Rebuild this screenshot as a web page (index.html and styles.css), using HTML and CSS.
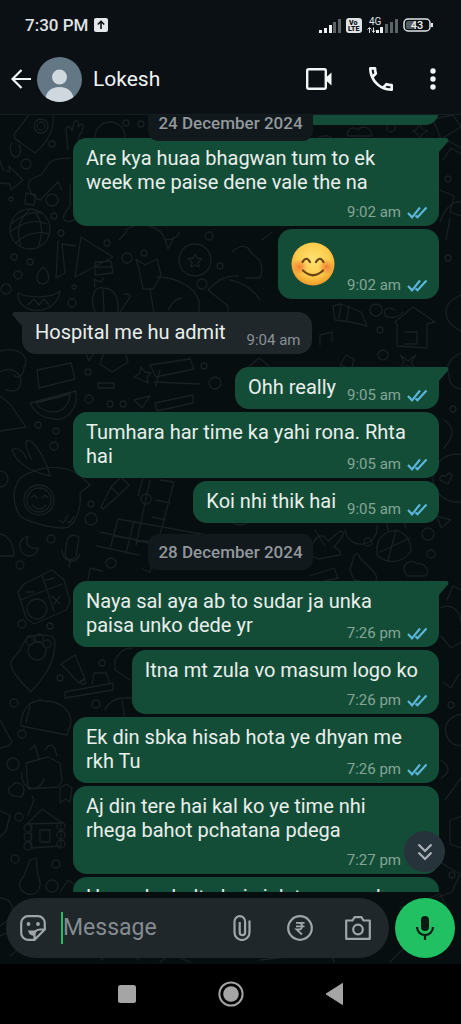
FILE: index.html
```html
<!DOCTYPE html>
<html lang="en">
<head>
<meta charset="utf-8">
<meta name="viewport" content="width=device-width, initial-scale=1">
<title>Lokesh</title>
<link rel="stylesheet" href="styles.css">
</head>
<body>
<svg class="defs" width="0" height="0" aria-hidden="true">
  <symbol id="ticks" viewBox="0 0 21 13">
    <path d="M1 7l4 4.300L13 1.500M8.500 9.500l2 1.800L19.500 1.500" fill="none" stroke="currentColor" stroke-width="2.100"/>
  </symbol>
</svg>
<div class="phone">
  <header class="top">
    <div class="status">
      <span class="clock">7:30 PM</span>
      <svg class="upload" width="14" height="14" viewBox="0 0 14 14"><rect width="14" height="14" rx="2" fill="#e4e8ea"/><path d="M7 11V3.500M3.800 6.500L7 3.300l3.200 3.200" fill="none" stroke="#0b1014" stroke-width="1.600"/></svg>
      <div class="indicators">
        <svg width="22" height="15" viewBox="0 0 22 15"><g fill="#eef1f2"><rect y="12" width="3" height="3"/><rect x="5" y="10" width="3" height="5"/><rect x="10" y="7" width="3" height="8"/></g><g fill="#5d6468"><rect x="14" y="4" width="3" height="11"/><rect x="19" y="1" width="3" height="14"/></g></svg>
        <svg width="16" height="15" viewBox="0 0 16 15"><rect width="16" height="15" rx="3" fill="#dfe3e5"/><g class="volte"><text x="3" y="7">Vo</text><text x="2" y="13">LTE</text></g></svg>
        <svg width="31" height="17" viewBox="0 0 31 17"><text class="net" x="2" y="8">4G</text><path d="M2.500 16v-5M.5 12.500l2-2 2 2M6.500 10.500v5M5 13.500l1.500 2 1.500-2" stroke="#dfe3e5" fill="none"/><g fill="#eef1f2"><rect x="9" y="13" width="3" height="3"/><rect x="13" y="10" width="3" height="6"/></g><g fill="#5d6468"><rect x="18" y="7" width="3" height="9"/><rect x="23" y="5" width="3" height="11"/><rect x="28" y="2" width="3" height="14"/></g></svg>
        <svg width="30" height="14" viewBox="0 0 30 14"><rect x="1" y="1" width="26" height="12" rx="4" fill="none" stroke="#dfe3e5" stroke-width="1.500"/><rect x="3" y="3" width="9" height="8" rx="2" fill="#555b5f"/><path d="M29 5v4" stroke="#dfe3e5" stroke-width="2"/><text class="charge" x="14" y="11">43</text></svg>
      </div>
    </div>
    <div class="appbar">
      <button class="icon-btn" aria-label="Back"><svg width="20" height="20" viewBox="0 0 20 20"><path d="M20 10H2M10.500 1L1.500 10l9 9" fill="none" stroke="#f3f6f7" stroke-width="2.200"/></svg></button>
      <svg class="avatar" width="45" height="45" viewBox="0 0 45 45"><defs><clipPath id="face"><circle cx="22.500" cy="22.500" r="22.500"/></clipPath></defs><g clip-path="url(#face)"><rect width="45" height="45" fill="#647785"/><circle cx="22.500" cy="20" r="7.500" fill="#cfd8df"/><path d="M8 45c0-10 6-15 14.500-15S37 35 37 45z" fill="#cfd8df"/></g></svg>
      <h1 class="name">Lokesh</h1>
      <nav class="actions">
        <button class="icon-btn" aria-label="Video call"><svg width="26" height="22" viewBox="0 0 26 22"><rect x="1.200" y="1.200" width="18.600" height="19.600" rx="1.500" fill="none" stroke="#f3f6f7" stroke-width="2.400"/><path d="M20 9.500L25.500 4.500v13L20 12.500z" fill="#f3f6f7"/></svg></button>
        <button class="icon-btn" aria-label="Voice call"><svg width="24" height="24" viewBox="3 3 18 18"><path fill="#f3f6f7" d="M6.540 5c.06.890.21 1.760.45 2.590l-1.200 1.200c-.41-1.200-.67-2.470-.76-3.790h1.510m9.860 12.020c.85.240 1.720.390 2.600.450v1.490c-1.320-.09-2.590-.35-3.800-.75l1.200-1.190M7.500 3H4c-.55 0-1 .45-1 1 0 9.390 7.610 17 17 17 .55 0 1-.45 1-1v-3.490c0-.55-.45-1-1-1-1.240 0-2.450-.2-3.570-.57-.1-.04-.21-.05-.31-.05-.26 0-.51.1-.71.290l-2.200 2.200c-2.830-1.450-5.150-3.760-6.590-6.590l2.200-2.200c.28-.28.360-.67.250-1.020C8.700 6.450 8.500 5.250 8.500 4c0-.55-.45-1-1-1z"/></svg></button>
        <button class="icon-btn" aria-label="More options"><svg width="6" height="22" viewBox="0 0 6 22"><g fill="#f3f6f7"><circle cx="3" cy="3" r="2.700"/><circle cx="3" cy="11" r="2.700"/><circle cx="3" cy="19" r="2.700"/></g></svg></button>
      </nav>
    </div>
  </header>

  <div class="conversation">
    <svg class="wallpaper" viewBox="0 115 461 849" preserveAspectRatio="xMidYMin slice" aria-hidden="true">
      <g fill="none" stroke="#182023" stroke-width="1.300" stroke-linejoin="round" stroke-linecap="round">
        <path d="M15 133l14-18M53 115c2 14-6 28-18 38l-20-14M15 133c-2 4 0 6 4 8M12 143c-4 6 0 14 4 14s6-8 3-12M68 150l-2-20c0-6 5-4 6 1l2-8c2-5 6-2 4 4l3-3c4 0 2 8-2 12l-1 14M95 137a14 14 0 0 1 30 0"/>
        <circle cx="41" cy="126" r="7"/><circle cx="41" cy="126" r="4"/>
        <path d="M0 161l3 9 7 2-1-6 14 14-12 10-1-6-10-1M30 180c-4 6 2 18 10 20l18-18 4 8M30 180l12-6 8-12c8-5 16-3 20-4M26 193l10 2-2 10-9-1zM70 185v20l-6 10c-3 8 8 8 14 2"/>
        <circle cx="30" cy="229" r="20"/><path d="M11 224q18-14 30-11M10 232q20-16 37-8M16 243q14-14 33-9M30 209q-17 16-9 37M33 209q14 16 5 38"/>
        <path d="M58 241l-2 37 9-5-3-29 14 2M81 237l32 20-38 20zM95 262l16-1 2 12-18 2zM94 267h18M119 240l8-9M125 230c16-10 36-4 40 10 8 0 14-4 14-8M165 240l3 9 6-12"/>
        <circle cx="195" cy="260" r="16"/><path d="M195 254l2 4 5 1-4 3 1 5-4-2-4 2 1-5-4-3 5-1z"/>
        <path d="M18 293c-2 22 38 25 42-2-10 8-32 7-42 2zM43 267c-8 7-8 16 0 17 8-1 7-12 0-17zM28 305l6-6 5 6 5-6 5 6M95 312c-6-15 0-26 8-24 12 0 16 10 15 24M103 290l1 22M95 287l-1-8 6 3 4-4M120 312c12-18 14-18 4-18M139 269l-3-10 9 6 12-6 4 16-8 14h-10l-4-20M157 277c20 0 38 10 42 24v12M150 289l4 24M168 310q6-12 14-12M208 290q14-16 30-14M208 290l20 16v8"/>
        <path d="M37 370l34-7 4 16-36 9zM0 351c22-5 30 8 24 16 0 10-8 12-10 8M0 372c10-6 24 0 20 14-4 8-10 4-14 4M30 403l46-12c2 20-10 30-22 28-12-1-20-8-24-16zM36 403l34-9c0 10-8 18-16 18-10 0-15-4-18-9M0 396l10 8 16 23-26 4M100 364l4-12 20-4 4 14-16 10zM150 365l40-6 4 10-38 8zM154 382l46 2M160 370l-4 16M155 403l38-8v8l-36 8z"/>
        <path d="M12 450c6 16 22 22 38 26-4-16-10-26-18-34-10-6-6 8 0 18M12 450c6-4 12 2 14 8M20 478q24-16 50-8 10 4 20 15l-10 8c2 14-5 35-16 35-14 0-36-6-44-12q-12-20 0-38z"/>
        <circle cx="39" cy="500" r="15"/><circle cx="39" cy="500" r="12"/><path d="M31 498l3-3 3 3M42 498l3-3 3 3M32 505q8 8 14 0M59 520l4 3 5-8M66 521l3 2 5-6M101 507l10-20 8 8-16 14zM111 487l10-10 8 8-10 10M128 478l18-12-8 30M118 519l100 18M113 536l90 14M100 532l98 22M97 546l42 9M118 519l-8 30M134 521l-8 32M150 480l-14 65M174 482l-24 90M160 480l14 2M156 500l14 3M152 517l14 3M150 572l-8-3"/>
        <path d="M28 536c-12 4-10 18 0 20 6 0 10-4 10-8-8 2-14-4-10-12M67 540q4-8 12-3l-3 20q-8 6-11-2zM62 550c0 12 14 16 18 4M70 562l-1 5M0 534c10 2 14 12 14 22H0M18 592l6-8 28-14 12 10 6 22-4 8-32 14-8-6zM20 600l42-16M42 575l12 36M26 592h8M46 580l8-2M52 596l8 8M60 596l-6 8M88 580l2-12 12 3"/><circle cx="37" cy="609" r="10"/>
        <path d="M22 646l6-10c10 0 22-4 27 4 0 24-10 36-24 52-8-8-20-20-20-28 0-8 8-8 11-18z"/><circle cx="37" cy="651" r="9"/><circle cx="30" cy="641" r="4"/><circle cx="39" cy="638" r="4"/><circle cx="47" cy="644" r="4"/>
        <path d="M61 664l14-9 10 24-6 4zM80 681l4-2 2 4-4 2zM65 692l48-9v7l-48 8zM92 684l2-11h12l4 10M21 721c4-18 12-22 24-20 14 0 26 8 26 22l-4 12-46-9zM26 722l4-16M32 703l10-4M0 720l12 22-4 4-8 2M26 763l22-6 12 6 2 18-4 6-30 2zM22 773c-2 18 18 20 22 6M30 750l5-5 4 14M45 750q8-12 12 6M60 788l6-4 6 4-2 14-5-3-5 4z"/>
        <path d="M27 824l15-15 20 14M27 824l36-1M31 824v24l30-2v-22M40 830h10v12H40zM28 815l6-15-2-4"/><circle cx="28" cy="828" r="4"/><circle cx="28" cy="837" r="4"/><circle cx="28" cy="846" r="4"/><circle cx="61" cy="826" r="4"/><circle cx="61" cy="835" r="4"/><circle cx="61" cy="844" r="4"/>
        <path d="M30 860l6-2 2 18c6 12-2 20-10 18s-12-10-4-18zM0 898c12 0 16 12 10 20l-10 8M0 936q18-10 20 12l-10 8M60 892l8-12 12 8M100 960q20-12 40 0M160 962l10-8 20 8"/>
        <path d="M318 138q14-6 14 4M348 136c-2-8 6-10 10-6 4-6 14-2 14 6zM413 131l4-2 2-6 3 6 6 2-6 3-2 5-3-5zM433 119l20-4 8 12-20 12zM447 140l14 8M443 160l8-12 10 6M440 190l14 6-4 16 11 4M440 222q8-22 21-20M446 240l4-22M232 252q14-12 20 2 14 8 8 24h-14M262 240l10-8M230 280q20 4 30 20M333 306l8-2 20 8 6 14-16-4-16-2zM341 304l-2 14M349 306l-2 14M320 345v-10l12-3v10M395 322l18-15 22 15-8 2v24l-30-2v-22zM405 332h12v12h-12M461 295c-20 8-20 26 0 36M395 310c-8-4-12-1-10 5 4 4 14 3 18-3"/>
        <path d="M245 370l14-12 10 8M340 365l6-10 8 4-2 10zM400 355l8 6 8-6-5 8 5 7-9-5-8 5 5-8zM461 353q-18 8-12 22 0 12 12 14M444 420q16 10 0 28"/>
        <circle cx="457" cy="478" r="24"/><path d="M440 480l8 4 4-8q-2-6-6 0-7-2-6 4M437 516l14 4-10 8zM377 549c0-12 10-20 22-18 8 4 12 10 12 20-8 12-24 14-34 4zM388 530l-2-12 16-2 4 12M380 552l30-14M388 560l8-30M315 530l10 16M312 545q8-16 16-4l12-10q5 0 2 6l-8 10q8 4 6 8l-22 4q-10-4-12-10M350 570l4-14q4-6 6 2l14 14q6 8-2 12l-18-4zM405 572c-4-8 6-14 12-8 8-2 14 8 8 12h-18zM310 576l24-8 4 10-26 6M345 530a16 16 0 0 0 32-4"/>
        <path d="M447 600l6-14 8 4M440 608c12-6 21 4 21 16M441 636l10 12 10-6M443 682l8 6 8-14M461 714c-18 4-20 20-8 30l8 2M441 760q14 10 0 18M445 800l16-22M452 820l9-4M450 820v24l11 4M440 862l20 12-8 18-16 6M400 908l40-14 6 12M390 962l24-24M260 960l70-8 4 10"/>
        <g><circle cx="52" cy="200" r="6"/><circle cx="26" cy="164" r="5"/><circle cx="52" cy="144" r="3"/><circle cx="126" cy="123" r="3"/><circle cx="141" cy="124" r="3"/><circle cx="11" cy="199" r="2"/><circle cx="61" cy="233" r="3"/><circle cx="54" cy="216" r="3"/><circle cx="127" cy="258" r="5"/><circle cx="107" cy="243" r="3"/><circle cx="144" cy="253" r="3"/><circle cx="209" cy="236" r="4"/><circle cx="220" cy="266" r="3"/><circle cx="202" cy="284" r="5"/><circle cx="18" cy="275" r="4"/><circle cx="14" cy="257" r="3"/><circle cx="30" cy="262" r="3"/><circle cx="72" cy="303" r="4"/><circle cx="6" cy="289" r="5"/><circle cx="74" cy="287" r="2"/><circle cx="391" cy="128" r="4"/><circle cx="376" cy="310" r="6"/><circle cx="380" cy="330" r="3"/><circle cx="448" cy="258" r="3"/><circle cx="448" cy="179" r="3"/></g>
        <g><circle cx="89" cy="399" r="4"/><circle cx="88" cy="372" r="3"/><circle cx="110" cy="404" r="3"/><circle cx="123" cy="404" r="3"/><circle cx="215" cy="383" r="6"/><circle cx="204" cy="366" r="3"/><circle cx="54" cy="446" r="4"/><circle cx="56" cy="431" r="3"/><circle cx="38" cy="425" r="3"/><circle cx="0" cy="479" r="8"/><circle cx="91" cy="519" r="6"/><circle cx="91" cy="504" r="3"/><circle cx="51" cy="539" r="4"/><circle cx="20" cy="565" r="4"/><circle cx="111" cy="563" r="5"/><circle cx="146" cy="499" r="5"/><circle cx="22" cy="624" r="4"/><circle cx="50" cy="626" r="3"/><circle cx="60" cy="678" r="3"/><circle cx="102" cy="663" r="3"/><circle cx="96" cy="704" r="4"/><circle cx="14" cy="703" r="4"/><circle cx="22" cy="734" r="4"/><circle cx="13" cy="764" r="6"/><circle cx="19" cy="817" r="4"/><circle cx="56" cy="864" r="4"/><circle cx="15" cy="859" r="4"/><circle cx="52" cy="886" r="6"/><circle cx="428" cy="534" r="6"/><circle cx="368" cy="542" r="4"/><circle cx="431" cy="554" r="4"/><circle cx="383" cy="355" r="5"/><circle cx="453" cy="409" r="3"/><circle cx="451" cy="705" r="3"/><circle cx="452" cy="875" r="3"/></g>
        <path d="M97 347h14M98 383h16v5H98zM134 377l6-4 1-6 4 5 6 1-4 4 1 6-6-3zM134 400l16-4-8 12zM85 351l4 10 6-10M16 796c-8 0-10-8-4-10 4-6 12-2 12 4 0 6-4 8-8 6zM0 811l10 4-4 16-6 6M115 660q6-12 17-12M115 660v10l15 10M105 710q6-14 27-12M125 720l-3-20M230 521q10 8 20 0"/>
      </g>
    </svg>

    <main class="chat">
      <div class="floating-day"><span class="day-label">24 December 2024</span></div>
      <div class="messages">
        <div class="msg sent row"><p>Bhai paise kab doge</p></div>
        <div class="msg sent tail stacked"><p>Are kya huaa bhagwan tum to ek week me paise dene vale the na</p><div class="meta"><time>9:02 am</time><svg width="21" height="13"><use href="#ticks"/></svg></div></div>
        <div class="msg sent row"><svg class="emoji" role="img" aria-label="Smiling face" width="44" height="44" viewBox="0 0 44 44"><defs><radialGradient id="skin" cx=".5" cy=".4" r=".6"><stop offset="0" stop-color="#ffe273"/><stop offset=".65" stop-color="#fccb4a"/><stop offset="1" stop-color="#f09a28"/></radialGradient><radialGradient id="blush"><stop offset="0" stop-color="#ef6a2f" stop-opacity=".8"/><stop offset="1" stop-color="#ef6a2f" stop-opacity="0"/></radialGradient></defs><circle cx="22" cy="22" r="21.500" fill="url(#skin)"/><circle cx="8.500" cy="25" r="8" fill="url(#blush)"/><circle cx="35.500" cy="25" r="8" fill="url(#blush)"/><g fill="none" stroke="#6b4316" stroke-width="2.200" stroke-linecap="round"><path d="M11.500 20q4-6.500 7.500 0M25 20q4-6.500 7.500 0M12 28.500q10 9.500 20 0"/></g></svg><div class="meta"><time>9:02 am</time><svg width="21" height="13"><use href="#ticks"/></svg></div></div>
        <div class="msg received tail row"><p>Hospital me hu admit</p><div class="meta"><time>9:04 am</time></div></div>
        <div class="msg sent tail row"><p>Ohh really</p><div class="meta"><time>9:05 am</time><svg width="21" height="13"><use href="#ticks"/></svg></div></div>
        <div class="msg sent overlap"><p>Tumhara har time ka yahi rona. Rhta hai</p><div class="meta"><time>9:05 am</time><svg width="21" height="13"><use href="#ticks"/></svg></div></div>
        <div class="msg sent row"><p>Koi nhi thik hai</p><div class="meta"><time>9:05 am</time><svg width="21" height="13"><use href="#ticks"/></svg></div></div>
        <div class="day"><span class="day-label">28 December 2024</span></div>
        <div class="msg sent tail overlap"><p>Naya sal aya ab to sudar ja unka paisa unko dede yr</p><div class="meta"><time>7:26 pm</time><svg width="21" height="13"><use href="#ticks"/></svg></div></div>
        <div class="msg sent stacked"><p>Itna mt zula vo masum logo ko</p><div class="meta"><time>7:26 pm</time><svg width="21" height="13"><use href="#ticks"/></svg></div></div>
        <div class="msg sent overlap"><p>Ek din sbka hisab hota ye dhyan me rkh Tu</p><div class="meta"><time>7:26 pm</time><svg width="21" height="13"><use href="#ticks"/></svg></div></div>
        <div class="msg sent stacked"><p>Aj din tere hai kal ko ye time nhi rhega bahot pchatana pdega</p><div class="meta"><time>7:27 pm</time><svg width="21" height="13"><use href="#ticks"/></svg></div></div>
        <div class="msg sent stacked"><p>Hum abe hulta hai sinlet nam se ko dekh lena</p></div>
      </div>
      <button class="jump" aria-label="Scroll to latest"><svg width="16" height="18" viewBox="0 0 16 18"><path d="M1.500 1.500L8 8l6.500-6.500M1.500 9.500L8 16l6.500-6.500" fill="none" stroke="#a9b0b6" stroke-width="2.200"/></svg></button>
    </main>

    <form class="composer">
      <div class="field">
        <button type="button" class="icon-btn" aria-label="Stickers"><svg width="26" height="26" viewBox="0 0 26 26" fill="none" stroke="#a0a5a9" stroke-width="2.200"><path d="M24.800 14V8a6.800 6.800 0 0 0-6.800-6.800H8A6.800 6.800 0 0 0 1.200 8v10A6.800 6.800 0 0 0 8 24.800h6.500L24.800 14.500h-4.500c-4 0-6 2-5.800 5.500v4.800"/><path d="M8 15.500h7.500l-2 5.300C10.500 20.500 8.500 18.500 8 15.500z" fill="#a0a5a9" stroke="none"/><g fill="#a0a5a9" stroke="none"><circle cx="8.500" cy="9" r="1.900"/><circle cx="18" cy="9" r="1.900"/></g></svg></button>
        <div class="entry"><input type="text" aria-label="Message" placeholder="Message"></div>
        <div class="tools">
          <button type="button" class="icon-btn" aria-label="Attach"><svg width="26" height="26" viewBox="0 0 26 26"><path d="M20.500 5.500V17.500a7.500 7.500 0 0 1-15 0V6.500a5.300 5.300 0 0 1 10.600 0v11a2.700 2.700 0 0 1-5.400 0V7" fill="none" stroke="#a0a5a9" stroke-width="2.200"/></svg></button>
          <button type="button" class="icon-btn" aria-label="Payment"><svg width="26" height="26" viewBox="0 0 26 26" fill="none" stroke="#a0a5a9" stroke-width="2.200"><circle cx="13" cy="13" r="11.800"/><path stroke-width="1.800" d="M9 7.900h8.500M9 11.300h8.500M9 7.900h2.500c4.700 0 4.700 6.600 0 6.600H9.500l5.500 5"/></svg></button>
          <button type="button" class="icon-btn" aria-label="Camera"><svg width="26" height="24" viewBox="0 0 26 24" fill="none" stroke="#a0a5a9" stroke-width="2.200"><path d="M1.200 4.500h6.300l2-3.300h7l2 3.300h6.300v18.300H1.200z" stroke-linejoin="round"/><circle cx="13" cy="13.500" r="4.800"/></svg></button>
        </div>
      </div>
      <button type="button" class="mic" aria-label="Record voice message"><svg width="20" height="26" viewBox="0 0 20 26"><rect x="6" y="1" width="8" height="15" rx="4" fill="#0b1a12"/><path d="M2 12a8 8 0 0 0 16 0M10 20v5" fill="none" stroke="#0b1a12" stroke-width="2.200"/></svg></button>
    </form>
  </div>

  <footer class="sysnav">
    <button class="icon-btn" aria-label="Recent apps"><svg width="26" height="26" viewBox="0 0 26 26"><rect x="4" y="4" width="18" height="18" rx="2.500" fill="#a5a5a5"/></svg></button>
    <button class="icon-btn" aria-label="Home"><svg width="26" height="26" viewBox="0 0 26 26"><circle cx="13" cy="13" r="11.600" fill="none" stroke="#a5a5a5" stroke-width="2"/><circle cx="13" cy="13" r="7.800" fill="#a5a5a5"/></svg></button>
    <button class="icon-btn" aria-label="Back"><svg width="26" height="26" viewBox="0 0 26 26"><path d="M20.500 2.500v21L4 13z" fill="#a5a5a5" stroke="#a5a5a5" stroke-linejoin="round"/></svg></button>
  </footer>
</div>
</body>
</html>
```
FILE: styles.css
```css
* { box-sizing: border-box; }
body {
  margin: 0;
  background: #000;
  color: #e9efec;
  font-family: Roboto, "Noto Sans", sans-serif;
}
svg { display: block; flex: none; }
.defs { position: absolute; }
p, h1 { margin: 0; }
button { border: 0; padding: 0; background: none; font: inherit; color: inherit; }

.phone { display: flex; flex-direction: column; height: 100vh; overflow: hidden; }

.top { background: #0b1014; border-bottom: 1px solid #151d20; }
.status { display: flex; align-items: center; gap: 6px; height: 45px; padding: 5px 28px 0 25px; }
.clock { font-size: 17px; font-weight: 500; color: #dfe3e5; }
.indicators { display: flex; align-items: center; gap: 5px; margin-left: auto; }
.volte { font-size: 7px; font-weight: 900; fill: #0b1014; }
.net { font-size: 10px; fill: #dfe3e5; }
.charge { font-size: 11px; font-weight: 500; fill: #eef1f2; text-anchor: middle; }

.appbar { display: flex; align-items: center; height: 69px; padding: 0 25px 1px 11px; }
.icon-btn { display: flex; align-items: center; justify-content: center; }
.avatar { margin: 0 11px 0 6px; }
.name { font-size: 21px; line-height: 28px; font-weight: 400; color: #f1f4f5; }
.actions { display: flex; align-items: center; gap: 37px; margin-left: auto; }

.conversation {
  position: relative;
  display: flex;
  flex-direction: column;
  flex: 1;
  min-height: 0;
  background: #070e10;
}
.wallpaper { position: absolute; inset: 0; width: 100%; height: 100%; }

.chat { position: relative; flex: 1; min-height: 0; overflow: hidden; }
.floating-day { position: absolute; top: -10px; left: 0; right: 0; z-index: 1; display: flex; justify-content: center; }
.day { display: flex; align-self: stretch; justify-content: center; margin: 8px 0; }
.day-label {
  padding: 0 10px;
  border-radius: 10px;
  background: #11191d;
  color: #92989c;
  font-size: 17px;
  line-height: 36px;
  font-weight: 500;
}

.messages { display: flex; flex-direction: column; gap: 3px; margin-top: -32px; padding: 0 22px; }
.msg {
  position: relative;
  max-width: 366px;
  padding: 8px 11px 10px 13px;
  border-radius: 14px;
  font-size: 20px;
  line-height: 24px;
}
.msg p { padding-right: 4px; }
.sent { align-self: flex-end; background: #144d37; }
.received { align-self: flex-start; background: #1f272b; }
.tail { margin-top: 10px; }
.day + .tail { margin-top: 0; }
.sent.tail { border-top-right-radius: 0; }
.received.tail { border-top-left-radius: 0; }
.tail::before { content: ""; position: absolute; top: 0; width: 10px; height: 14px; }
.sent.tail::before { left: 100%; background: #144d37; clip-path: polygon(0 0, 80% 0, 95% 10%, 90% 25%, 0 100%); }
.received.tail::before { right: 100%; background: #1f272b; clip-path: polygon(100% 0, 20% 0, 5% 10%, 10% 25%, 100% 100%); }

.row { display: flex; gap: 7px; }
.row.received { gap: 17px; }
.row .meta { align-self: flex-end; }
.stacked p { padding-right: 10px; }
.stacked .meta { justify-content: flex-end; margin-top: 9px; }
.overlap { display: grid; }
.overlap > * { grid-area: 1 / 1; }
.overlap .meta { align-self: end; justify-self: end; }
.meta {
  display: flex;
  align-items: center;
  gap: 6px;
  height: 18px;
  margin-bottom: -5px;
  color: #5bb8dc;
  font-size: 15px;
  line-height: 18px;
}
.meta time { color: #84a596; }
.received .meta time { color: #899196; }
.emoji { margin: 5px 5px 3px 0; }

.jump {
  position: absolute;
  right: 16px;
  bottom: 20px;
  display: flex;
  align-items: center;
  justify-content: center;
  width: 41px;
  height: 41px;
  border-radius: 50%;
  background: #27333b;
}

.composer { position: relative; display: flex; gap: 6px; padding: 6px; }
.field {
  display: flex;
  align-items: center;
  flex: 1;
  min-width: 0;
  height: 60px;
  padding: 0 18px 0 14px;
  border-radius: 30px;
  background: #1f272b;
}
.entry { flex: 1; min-width: 0; margin-left: 15px; border-left: 2px solid #21c063; }
.entry input {
  display: block;
  width: 100%;
  height: 32px;
  padding: 0;
  border: 0;
  outline: 0;
  background: none;
  color: #e9efec;
  font: 23px/32px Roboto, "Noto Sans", sans-serif;
}
.entry input::placeholder { color: #858c91; opacity: 1; }
.tools { display: flex; align-items: center; gap: 32px; }
.mic {
  display: flex;
  align-items: center;
  justify-content: center;
  width: 60px;
  height: 60px;
  border-radius: 50%;
  background: #21c063;
}

.sysnav { display: flex; align-items: center; justify-content: center; gap: 78px; height: 60px; background: #000; }
```
